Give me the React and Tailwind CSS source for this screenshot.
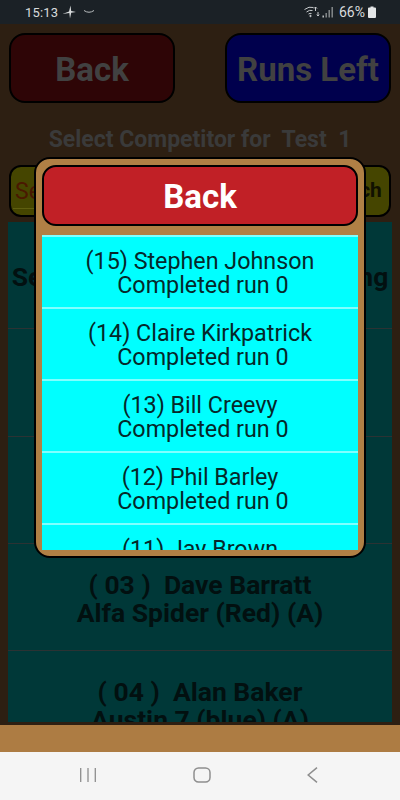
import React from "react";

const backdropRows = [
  { a: "Select Competitors For Starting" },
  { a: "( 01 )  John Smith", b: "Ford Escort (White) (A)" },
  { a: "( 02 )  Peter Jones", b: "Mini Cooper (Green) (A)" },
  { a: "( 03 )  Dave Barratt", b: "Alfa Spider (Red) (A)" },
  { a: "( 04 )  Alan Baker", b: "Austin 7 (blue) (A)" },
];

const picks = [
  "(15) Stephen Johnson",
  "(14) Claire Kirkpatrick",
  "(13) Bill Creevy",
  "(12) Phil Barley",
  "(11) Jay Brown",
];

function StatusBar() {
  return (
    <div className="h-[24px] shrink-0 bg-[#1b2126] flex items-center justify-between pl-[25px] pr-[24px] text-[#d8dbdc] text-[13px] leading-none">
      <div className="flex items-center gap-[4px]">
        <span className="tracking-[0.2px]">15:13</span>
        <svg width="14" height="14" viewBox="0 0 14 14" fill="#d8dbdc">
          <path d="M8.5 0.5 L9.2 6 L14 7 L9.2 7.8 L8 13.5 L7.3 8 L0.5 9 L7 6.6 Z" />
        </svg>
        <svg width="12" height="6" viewBox="0 0 12 6" fill="none" className="ml-[3px]">
          <path d="M1 1.5 Q6 5 11 1.5" stroke="#b9bdbf" strokeWidth="1" />
        </svg>
      </div>
      <div className="flex items-center">
        <svg width="16" height="12" viewBox="0 0 16 12" fill="none" stroke="#c8cbcd" strokeWidth="1">
          <path d="M0.5 3.5 Q5 0 9.5 1.5" />
          <path d="M2.5 6 Q5.5 3.5 8.5 4.5" />
          <path d="M4.5 8 Q6 7 7.5 7.5" />
          <circle cx="6.5" cy="10" r="0.7" fill="#c8cbcd" />
          <path d="M11.5 1 V5 M10 2.5 L11.5 1 L13 2.5 M14 10 V6 M12.8 8.6 L14 10 L15.2 8.6" />
        </svg>
        <svg width="12" height="12" viewBox="0 0 12 12" fill="#8b8f91" className="ml-[2px]">
          <rect x="0.5" y="9.5" width="1.4" height="2" fill="#c8cbcd" />
          <rect x="3.5" y="7" width="1.4" height="4.5" />
          <rect x="6.5" y="4" width="1.4" height="7.5" />
          <rect x="9.5" y="1" width="1.4" height="10.5" />
        </svg>
        <span className="ml-[5px] text-[14px]">66%</span>
        <svg width="8" height="12" viewBox="0 0 8 12" fill="#e4e6e7" className="ml-[3px]">
          <path d="M2.5 0.5 H5.5 V1.5 H7 Q8 1.5 8 2.5 V11 Q8 12 7 12 H1 Q0 12 0 11 V2.5 Q0 1.5 1 1.5 H2.5 Z" />
        </svg>
      </div>
    </div>
  );
}

function NavBar() {
  return (
    <div className="h-[48px] shrink-0 bg-[#f5f5f5] flex items-center justify-between pl-[80px] pr-[82px] pb-[2px]">
      <svg width="16" height="16" viewBox="0 0 16 16" stroke="#8e8e8e" strokeWidth="1.3" fill="none">
        <path d="M0.7 1 V15 M8 1 V15 M15.3 1 V15" />
      </svg>
      <svg width="18" height="16" viewBox="0 0 18 16" stroke="#8e8e8e" strokeWidth="1.5" fill="none">
        <rect x="1" y="1" width="16" height="14" rx="4.5" />
      </svg>
      <svg width="11" height="16" viewBox="0 0 11 16" stroke="#8e8e8e" strokeWidth="1.5" fill="none">
        <path d="M10 0.7 L1.2 8 L10 15.3" />
      </svg>
    </div>
  );
}

function Backdrop() {
  return (
    <div className="flex-1 min-h-0 bg-[#2d1f12] flex flex-col font-bold">
      <div className="flex justify-between px-[9px] pt-[9px]">
        <div className="w-[166px] h-[70px] rounded-[16px] border-2 border-black bg-[#2e0506] flex items-center justify-center pt-[3px] text-[33px] text-[#414141]">
          Back
        </div>
        <div className="w-[166px] h-[70px] rounded-[16px] border-2 border-black bg-[#00004d] flex items-center justify-center pt-[3px] text-[33px] text-[#414141]">
          Runs Left
        </div>
      </div>
      <div className="h-[62px] flex items-center justify-center pt-[13px] text-[23px] text-[#3a3a3a] whitespace-pre">
        Select Competitor for  Test  1
      </div>
      <div className="flex justify-between gap-[8px] px-[9px]">
        <div className="flex-1 h-[52px] rounded-[12px] border-2 border-black bg-[#454500] px-[2px] pt-[8px]">
          <div className="h-[34px] border-b border-[#5f5f10] pl-[2px] font-normal text-[23px] leading-[34px] text-[#4a1800]">
            Search
          </div>
        </div>
        <div className="w-[84px] h-[52px] rounded-[12px] border-2 border-black bg-[#454500] flex items-center justify-center text-[21px] text-[#111100]">
          Search
        </div>
      </div>
      <div className="flex-1 min-h-0 overflow-hidden mt-[5px] mx-[8px] mb-[3px] bg-[#003838] flex flex-col text-[26.5px] leading-[28px] text-[#021010] text-center">
        {backdropRows.map((row) => (
          <div
            key={row.a}
            className="h-[107.3px] shrink-0 border-b border-[#2b3233] flex flex-col items-center justify-center whitespace-pre pt-[3px]"
          >
            <span>{row.a}</span>
            {row.b && <span>{row.b}</span>}
          </div>
        ))}
      </div>
      <div className="h-[27px] shrink-0 bg-[#ad7c43]" />
    </div>
  );
}

function Modal() {
  return (
    <div className="absolute left-[34px] top-[157px] w-[332px] h-[401px] rounded-[16px] border-2 border-black bg-[#b08045] px-[6px] pt-[6px] flex flex-col">
      <div className="h-[61px] shrink-0 rounded-[14px] border-2 border-black bg-[#c12026] flex items-center justify-center pt-[3px] text-white font-bold text-[33px]">
        Back
      </div>
      <div className="mt-[9px] h-[315px] overflow-hidden bg-[#00ffff] text-[#05282a] text-[23.3px] leading-[24px] text-center">
        {picks.map((name) => (
          <div key={name} className="h-[72px] border-t-2 border-[#80ffff] flex flex-col items-center justify-center whitespace-pre pt-[1px]">
            <span>{name}</span>
            <span> Completed run 0</span>
          </div>
        ))}
      </div>
    </div>
  );
}

export default function App() {
  return (
    <div className="relative w-[400px] h-[800px] overflow-hidden flex flex-col font-['Roboto',sans-serif]">
      <StatusBar />
      <Backdrop />
      <NavBar />
      <Modal />
    </div>
  );
}
